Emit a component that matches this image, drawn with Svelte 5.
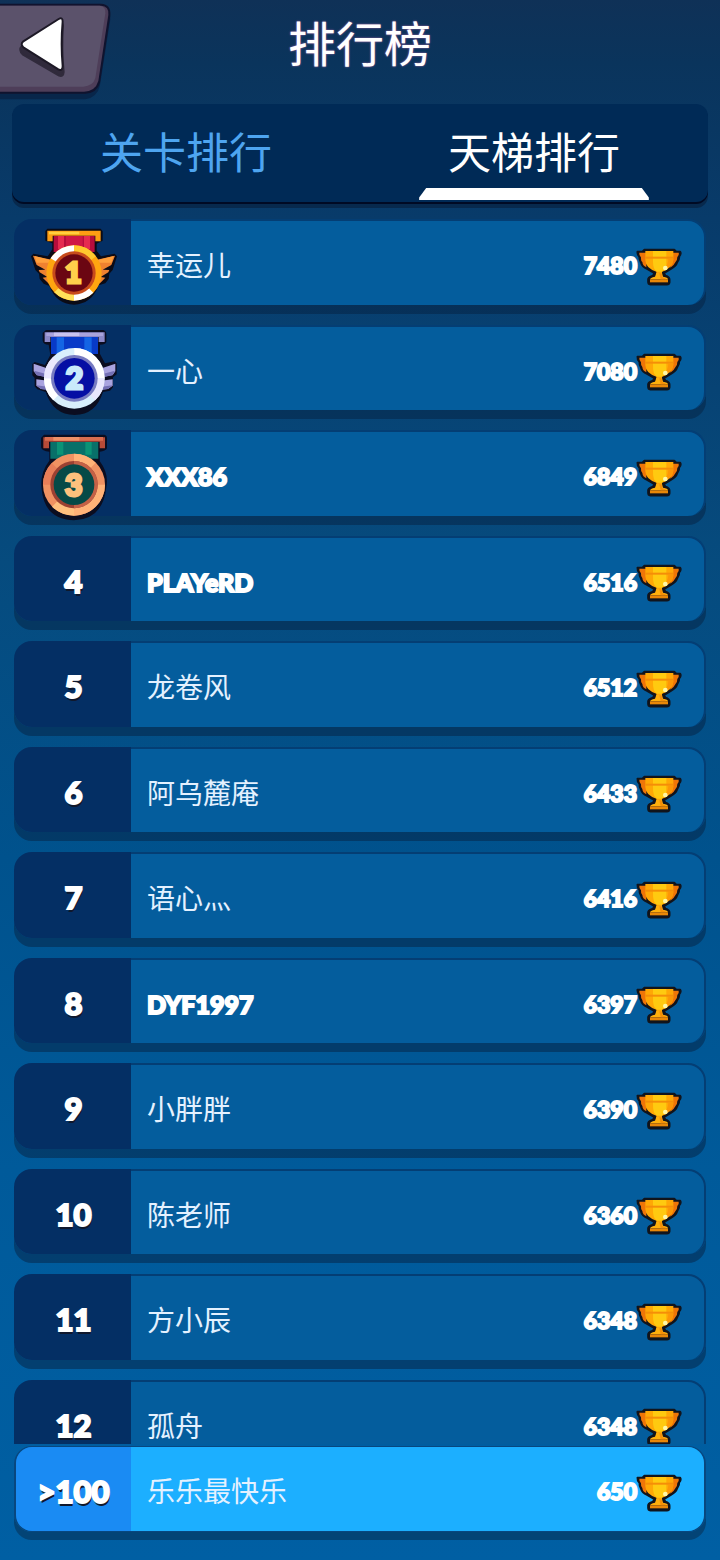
<script>
  const players = [
    { rank: 1, name: '幸运儿', score: 7480 },
    { rank: 2, name: '一心', score: 7080 },
    { rank: 3, name: 'XXX86', score: 6849 },
    { rank: 4, name: 'PLAYeRD', score: 6516 },
    { rank: 5, name: '龙卷风', score: 6512 },
    { rank: 6, name: '阿乌麓庵', score: 6433 },
    { rank: 7, name: '语心灬', score: 6416 },
    { rank: 8, name: 'DYF1997', score: 6397 },
    { rank: 9, name: '小胖胖', score: 6390 },
    { rank: 10, name: '陈老师', score: 6360 },
    { rank: 11, name: '方小辰', score: 6348 },
    { rank: 12, name: '孤舟', score: 6348 }
  ];
  const me = { rank: '>100', name: '乐乐最快乐', score: 650 };
  const tabs = ['关卡排行', '天梯排行'];
  let active = $state(1);
  const latin = (name) => /^[\x20-\x7e]+$/.test(name);
</script>

{#snippet trophy()}
  <svg class="trophy" viewBox="0 0 132 108" aria-hidden="true">
    <path d="M22 2H112L118 8H130Q134 14 127 22Q128 30 121 40Q117 53 103 59L82 72L85 80Q98 84 98 92V100Q97 107 90 107H40Q33 106 33 99V90Q36 83 48 80L51 72L30 60Q15 54 12 42Q6 32 7 24Q0 16 1 8H16Z" fill="#11141c" stroke="#11141c" stroke-width="5" stroke-linejoin="round" />
    <path d="M7 11H28V55Q17 50 16 39Q11 35 12 25Q6 19 7 11ZM105 11H125Q127 17 121 24Q121 35 115 40Q110 51 100 56Z" fill="#ef7508" />
    <path d="M25 6H109V34Q106 58 75 68V82H58V68Q26 58 25 34Z" fill="#ffa806" />
    <path d="M48 6H88V62L73 68H60Q47 62 48 34Z" fill="#ffca10" />
    <path d="M25 23H109V29H25Z" fill="#f58e08" />
    <path d="M94 29H109Q108 54 76 68Q94 50 94 29Z" fill="#fc9606" />
    <path d="M58 72H75L78 83Q93 85 93 91H39Q39 86 54 83Z" fill="#ffb00c" />
    <path d="M39 91H93V100H39Z" fill="#e88708" />
    <path d="M67 73H74L76 84L90 91H71Z" fill="#f58e08" />
    <circle cx="85" cy="57" r="7" fill="#fff7a8" />
  </svg>
{/snippet}

{#snippet medal(rank)}
  {#if rank === 1}
    <svg class="medal" viewBox="90 39 264 264" role="img" aria-label="1">
      <path d="M142 56H302L308 64V92L290 101V122L303 139L344 131L351 139L338 180L328 191L326 207L316 220L296 226Q276 282 222 284Q168 282 148 228L131 221L119 207L117 191L106 180L93 139L100 131L143 139L157 118V100L136 92V63Z" fill="#0b0b16" />
      <path d="M99 137L158 150L161 218L145 220L128 203L142 201L119 187L116 180L136 179L110 165ZM345 137L287 150L284 218L300 220L316 203L302 201L325 187L328 180L308 179L334 165Z" fill="#ef8130" />
      <path d="M104 138L150 150V158L110 158ZM341 138L294 150V158L334 158Z" fill="#ffa03c" />
      <path d="M161 78H284V126H161Z" fill="#b60d3c" />
      <path d="M174 78H192V118H174ZM252 78H270V118H252Z" fill="#e62b50" />
      <path d="M198 78H248V110H198Z" fill="#cf1745" />
      <path d="M142 62H302V94H286V77H158V94H142Z" fill="#ff9d13" />
      <path d="M147 65H238V73H147Z" fill="#ffd03e" />
      <circle cx="222" cy="189" r="83" fill="#ffa510" />
      <path d="M222 106V189L152 145Q175 108 222 106ZM222 272V189L280 248Q258 270 222 272Z" fill="#fff" />
      <path d="M222 106A83 83 0 0 1 288 139L222 189Z" fill="#ffc82e" />
      <path d="M163 247L222 189V272Q186 271 163 247Z" fill="#ffe159" />
      <circle cx="222" cy="189" r="65" fill="#c84b1b" />
      <circle cx="222" cy="189" r="56" fill="#6b0612" />
      <text x="220" y="219" font-size="86" fill="#ffd04b" stroke="#ffd04b" stroke-width="9" text-anchor="middle">1</text>
    </svg>
  {:else if rank === 2}
    <svg class="medal" viewBox="90 33 264 264" role="img" aria-label="2">
      <path d="M138 36H310Q319 39 319 48V72Q316 80 300 80V108L315 136L344 130L350 136V169L339 178V208L330 218L309 222Q288 290 224 291Q159 290 137 222L112 214L104 205V180L97 172V138L104 132L135 141L151 111L146 80Q130 80 128 68V45Z" fill="#0b0d20" />
      <path d="M101 137L150 154V180L110 171L101 160ZM346 137L296 154V180L338 171L346 160ZM109 184L156 190V217L123 213L109 203ZM338 184L292 190V217L324 213L338 203Z" fill="#a9a3df" />
      <path d="M102 158L150 171V180L110 172ZM345 158L296 171V180L338 172ZM109 202L153 208V217L123 213ZM338 202L294 208V217L324 213Z" fill="#7470b5" />
      <path d="M153 56H294V108H153Z" fill="#083ac8" />
      <path d="M170 58H192V106H170ZM253 58H275V106H253Z" fill="#1465e4" />
      <path d="M134 43H314V72H296V57H151V72H134Z" fill="#8c89c9" />
      <path d="M139 44H309V54H139Z" fill="#a9a3dc" />
      <path d="M162 44H238V54H162Z" fill="#c9c3ef" />
      <circle cx="223" cy="181" r="91" fill="#d9effc" />
      <path d="M223 90A91 91 0 0 1 314 181H223ZM132 181H223L160 247Q132 221 132 181Z" fill="#fff" />
      <path d="M160 116L223 181L132 181Q132 142 160 116ZM285 247L223 181L314 181Q313 223 285 247Z" fill="#e9e7fd" />
      <circle cx="223" cy="181" r="70" fill="#777bc1" />
      <circle cx="223" cy="181" r="61" fill="#050fa4" />
      <text x="223" y="214" font-size="90" fill="#c9eafb" stroke="#c9eafb" stroke-width="9" text-anchor="middle">2</text>
    </svg>
  {:else}
    <svg class="medal" viewBox="90 30 264 264" role="img" aria-label="3">
      <path d="M132 32H313Q321 34 321 43V73Q317 82 299 83V111Q327 148 319 190Q309 286 222 289Q133 286 125 196Q119 147 148 110V83Q126 82 123 70V42Z" fill="#0b0d20" />
      <path d="M151 54H295V104H151Z" fill="#087069" />
      <path d="M171 54H190V92H171ZM256 54H275V92H256Z" fill="#0b9376" />
      <path d="M130 40H315V73H299V53H147V73H130Z" fill="#b84b38" />
      <path d="M135 39H309V50H135Z" fill="#d96d50" />
      <path d="M160 39H238V50H160Z" fill="#ee9068" />
      <circle cx="222" cy="182" r="93" fill="#f09262" />
      <path d="M222 89A93 93 0 0 1 287 116L222 182ZM315 182A93 93 0 0 1 222 275V182Z" fill="#ffb277" />
      <path d="M156 248L222 182V275Q182 274 156 248Z" fill="#ffc07e" />
      <path d="M155 117L222 182L129 182Q130 144 155 117Z" fill="#e87e58" />
      <circle cx="222" cy="182" r="71" fill="#9b4132" />
      <path d="M222 111A71 71 0 0 1 222 253Z" fill="#c46146" />
      <circle cx="222" cy="182" r="61" fill="#064a47" />
      <text x="221" y="216" font-size="90" fill="#fcc17d" stroke="#fcc17d" stroke-width="9" text-anchor="middle">3</text>
    </svg>
  {/if}
{/snippet}

{#snippet entry(p)}
  <div class="rank">
    {#if p.rank <= 3}
      {@render medal(p.rank)}
    {:else}
      <span>{p.rank}</span>
    {/if}
  </div>
  <div class="info">
    <span class="name" class:latin={latin(p.name)}>{p.name}</span>
    <span class="score">{p.score}</span>
    {@render trophy()}
  </div>
{/snippet}

<main>
  <header>
    <button class="back" aria-label="返回">
      <svg viewBox="0 0 336 306" aria-hidden="true">
        <path d="M0 22H305Q333 24 331 58L300 256Q292 293 256 298H0Z" fill="#08264a" />
        <path d="M0 11H303Q334 13 331 47L300 248Q291 279 256 281H0Z" fill="#10132e" />
        <path d="M0 17H303Q328 18 325 45L295 243Q286 274 252 275H0Z" fill="#4e3e59" />
        <path d="M0 17H299Q318 19 316 40L286 234Q279 258 250 260H0Z" fill="#5b526b" />
        <path d="M180 70Q188 66 189 77Q184 145 191 216Q190 232 177 227L68 163Q55 150 66 137Z" fill="#302a3b" stroke="#302a3b" stroke-width="6" />
        <path d="M176 57Q188 50 188 65Q182 132 188 198Q188 214 175 208L70 142Q60 133 70 124Z" fill="#fff" stroke="#1d1926" stroke-width="6" stroke-linejoin="round" />
      </svg>
    </button>
    <h1>排行榜</h1>
  </header>

  <nav>
    {#each tabs as tab, i}
      <button class="tab" class:active={active === i} aria-pressed={active === i} onclick={() => (active = i)}>{tab}</button>
    {/each}
  </nav>

  <ol class="list">
    {#each players as p}
      <li class="row">{@render entry(p)}</li>
    {/each}
  </ol>

  <footer>
    <div class="row me">{@render entry(me)}</div>
  </footer>
</main>

<style>
  :global(body) {
    margin: 0;
    background: #005c9f;
  }
  main {
    box-sizing: border-box;
    height: 100vh;
    display: flex;
    flex-direction: column;
    background: linear-gradient(#0f3157 0%, #0a345c 4%, #083b6a 14%, #064b7e 36%, #00528d 55%, #005a9a 75%, #005fa3 100%);
    font-family: Lato, "Noto Sans CJK SC", sans-serif;
    color: #fff;
  }
  header {
    flex: none;
    height: 104px;
    display: grid;
    grid-template-columns: 1fr auto 1fr;
    align-items: start;
  }
  button {
    border: 0;
    padding: 0;
    background: none;
    font: inherit;
    color: inherit;
    cursor: pointer;
  }
  .back {
    justify-self: start;
    line-height: 0;
  }
  .back svg {
    width: 112px;
    height: 102px;
  }
  h1 {
    margin: 0;
    font-family: "Noto Sans CJK SC", sans-serif;
    font-size: 48px;
    line-height: 82px;
    font-weight: 400;
    text-shadow: 0 0 2px #b56cae;
  }
  nav {
    flex: none;
    display: flex;
    height: 98px;
    margin: 0 12px 15px;
    border-radius: 12px;
    background: #002a56;
    box-shadow: 0 2px 0 #000a24, 0 6px 0 #07294d;
  }
  .tab {
    flex: 1;
    display: flex;
    flex-direction: column;
    align-items: center;
    justify-content: flex-end;
    font-family: "Noto Sans CJK SC", sans-serif;
    font-size: 43px;
    line-height: 76px;
    color: #4ea5f0;
  }
  .tab::after {
    content: "";
    width: 66%;
    height: 12px;
    margin: 0 0 2px;
  }
  .tab.active {
    color: #fff;
  }
  .tab.active::after {
    background: #fff;
    clip-path: polygon(0 100%, 0 80%, 7px 0, calc(100% - 7px) 0, 100% 80%, 100% 100%);
  }
  .list {
    flex: 1 1 0;
    min-height: 0;
    margin: 0;
    padding: 2px 14px 0;
    list-style: none;
    display: grid;
    grid-auto-rows: 86px 85px;
    row-gap: 20px;
    overflow-y: auto;
    scrollbar-width: none;
  }
  .row {
    box-sizing: border-box;
    display: flex;
    border-radius: 18px;
    box-shadow: 0 9px 0 rgba(6, 34, 66, 0.5);
  }
  .rank {
    box-sizing: border-box;
    flex: none;
    width: 117px;
    display: flex;
    align-items: center;
    justify-content: center;
    padding: 4px 0 0 2px;
    border-radius: 18px 0 0 18px;
    background: #042f64;
    font-size: 31px;
    font-weight: 900;
    -webkit-text-stroke: 2px #fff;
    text-shadow: 1px 3px 0 #10182c;
  }
  .medal {
    flex: none;
    width: 88px;
    height: 88px;
    margin-bottom: -6px;
    font-weight: 900;
    text-shadow: none;
    -webkit-text-stroke: 0;
  }
  .info {
    box-sizing: border-box;
    flex: 1;
    min-width: 0;
    display: flex;
    align-items: center;
    padding: 4px 23px 0 16px;
    border: solid #043e74;
    border-width: 2px 2px 0 0;
    border-radius: 0 18px 18px 0;
    background: #045d9d;
  }
  .name {
    flex: 1;
    min-width: 0;
    font-size: 28px;
    line-height: 40px;
    color: #e4f1ff;
    white-space: nowrap;
  }
  .latin {
    font-size: 25px;
    font-weight: 900;
    color: #fff;
    -webkit-text-stroke: 2px #fff;
  }
  .score {
    font-size: 23px;
    line-height: 40px;
    font-weight: 900;
    -webkit-text-stroke: 2px #fff;
  }
  .trophy {
    flex: none;
    width: 44px;
    height: 36px;
    margin-top: 3px;
    overflow: visible;
  }
  footer {
    flex: none;
    padding: 2px 14px 28px;
  }
  .me {
    height: 86px;
    border: solid #08477f;
    border-width: 1px 2px;
    box-shadow: 0 8px 0 #034476;
  }
  .me .rank {
    width: 115px;
    padding: 4px 0 0;
    border-radius: 16px 0 0 16px;
    background: #1a8bf3;
  }
  .me .info {
    border: 0;
    border-radius: 0 16px 16px 0;
    background: #1cafff;
  }
</style>
